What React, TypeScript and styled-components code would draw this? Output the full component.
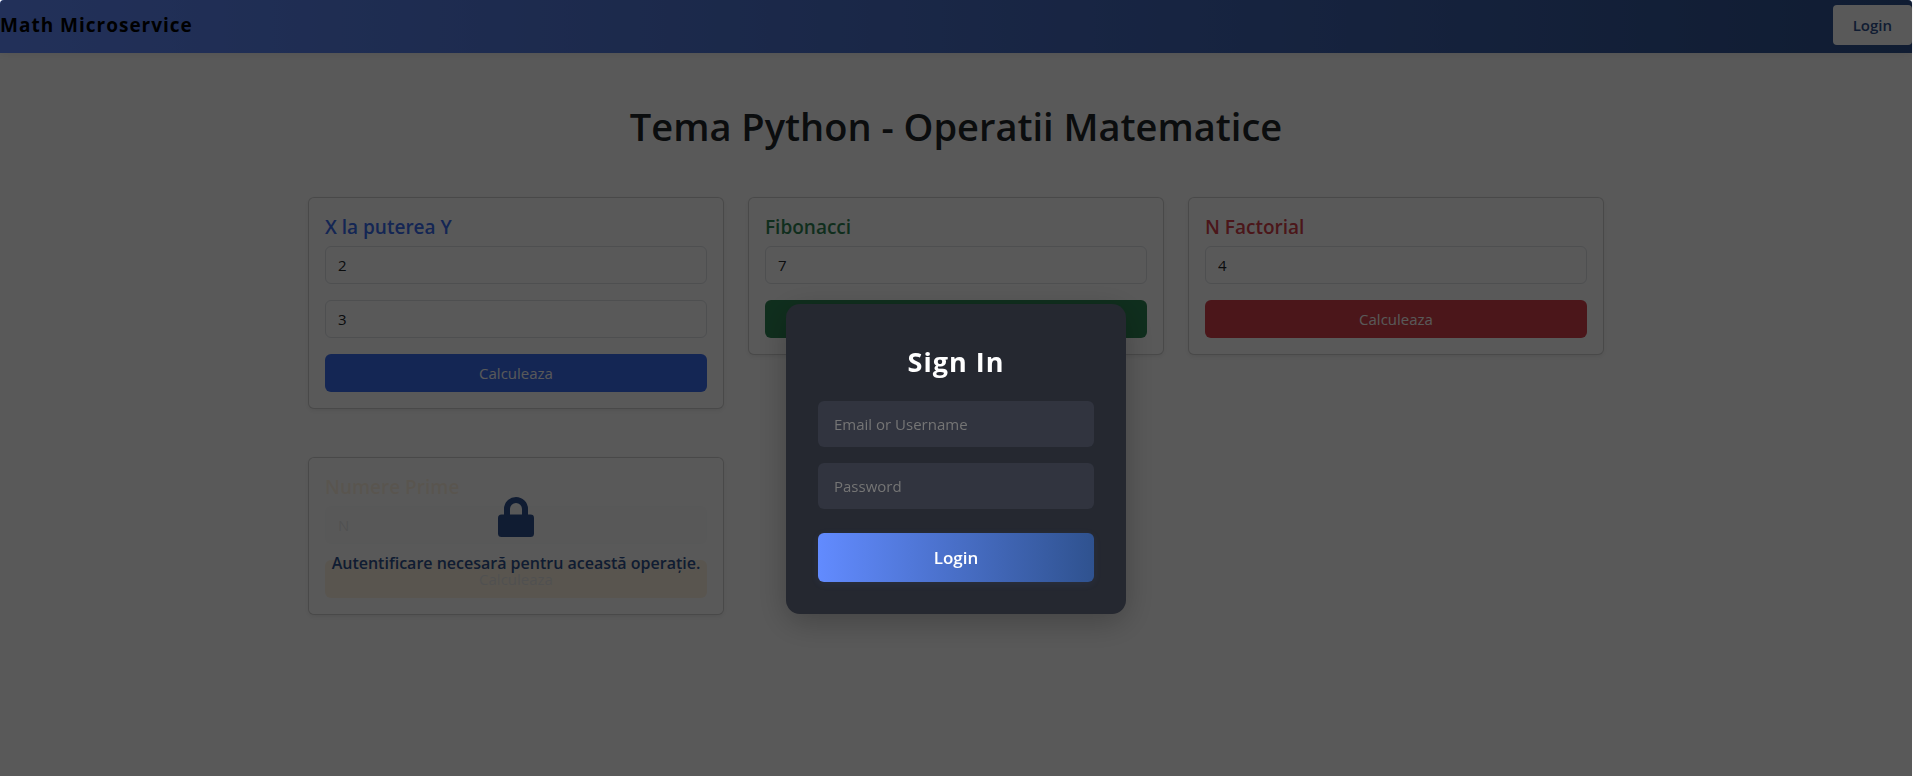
import React from "react";
import styled, { createGlobalStyle } from "styled-components";

const GlobalStyle = createGlobalStyle`
  *, *::before, *::after { box-sizing: border-box; }
  body {
    margin: 0;
    background: #fff;
    color: #212529;
    font: 400 15px/24px "Open Sans", "Noto Sans", sans-serif;
  }
  h1, h2, p { margin: 0; }
  button, input { font: inherit; }
`;

const Page = styled.div`
  min-height: 100vh;
  padding-right: 1px;
`;

const NavBar = styled.header`
  display: flex;
  align-items: center;
  justify-content: space-between;
  padding: 5px 0 8px;
  border-radius: 4px 4px 0 0;
  background: linear-gradient(90deg, #628bff 0%, #2f528f 100%);
  box-shadow: 0 2px 8px rgba(0, 0, 0, 0.07);
`;

const Brand = styled.a`
  color: #000;
  font-size: 19px;
  font-weight: 700;
  letter-spacing: 1px;
  text-decoration: none;
`;

const NavButton = styled.button`
  height: 40px;
  padding: 0 20px;
  border: 0;
  border-radius: 4px;
  background: #fff;
  color: #2f528f;
  font-weight: 600;
`;

const Container = styled.main`
  max-width: 1320px;
  margin: 0 auto;
  padding: 48px 12px;
`;

const PageTitle = styled.h1`
  margin-bottom: 46px;
  font-size: 38px;
  font-weight: 600;
  line-height: 50px;
  text-align: center;
`;

const CardGrid = styled.div`
  display: grid;
  grid-template-columns: repeat(3, 1fr);
  align-items: start;
  gap: 48px 24px;
`;

const Card = styled.form`
  position: relative;
  display: flex;
  flex-direction: column;
  gap: 16px;
  padding: 16px;
  border: 1px solid rgba(0, 0, 0, 0.175);
  border-radius: 6px;
  background: #fff;
  box-shadow: 0 2px 4px rgba(0, 0, 0, 0.075);
`;

const CardTitle = styled.h2<{ $color: string }>`
  margin-bottom: -10px;
  color: ${(p) => p.$color};
  font-size: 19px;
  font-weight: 600;
  line-height: 26px;
`;

const NumberField = styled.input`
  width: 100%;
  height: 38px;
  padding: 6px 12px;
  border: 1px solid #dee2e6;
  border-radius: 6px;
  background: #fff;
  color: #212529;
  &:disabled { background: #e9ecef; }
  &::placeholder { color: #595c5f; opacity: 1; }
`;

const CalcButton = styled.button<{ $color: string; $text?: string }>`
  height: 38px;
  border: 0;
  border-radius: 6px;
  background: ${(p) => p.$color};
  color: ${(p) => p.$text ?? "#fff"};
`;

const LockCover = styled.div`
  position: absolute;
  inset: 0;
  display: flex;
  flex-direction: column;
  align-items: center;
  justify-content: center;
  gap: 14px;
  border-radius: 6px;
  background: rgba(255, 255, 255, 0.85);
  color: #2f528f;
  font-size: 16px;
  font-weight: 600;
  white-space: nowrap;
`;

const LockIcon = styled.svg`
  display: block;
  width: 36px;
  height: 40px;
`;

const Backdrop = styled.div`
  position: fixed;
  inset: 0 1px 0 0;
  display: flex;
  align-items: flex-start;
  justify-content: center;
  padding-top: 304px;
  border-radius: 4px 4px 0 0;
  background: rgba(0, 0, 0, 0.65);
`;

const Dialog = styled.form`
  display: flex;
  flex-direction: column;
  gap: 16px;
  width: 340px;
  padding: 40px 32px 32px;
  border-radius: 14px;
  background: #252830;
  box-shadow: 0 8px 32px rgba(0, 0, 0, 0.25);
`;

const DialogTitle = styled.h2`
  margin-bottom: 6px;
  color: #fff;
  font-size: 27px;
  font-weight: 700;
  letter-spacing: 1px;
  line-height: 35px;
  text-align: center;
`;

const DialogField = styled.input`
  width: 100%;
  height: 46px;
  padding: 0 16px;
  border: 0;
  border-radius: 6px;
  background: #31343f;
  color: #fff;
  &::placeholder { color: #757575; opacity: 1; }
`;

const DialogButton = styled.button`
  height: 49px;
  margin-top: 8px;
  border: 0;
  border-radius: 6px;
  background: linear-gradient(90deg, #628bff 0%, #2f528f 100%);
  box-shadow: 0 2px 8px rgba(98, 139, 255, 0.08);
  color: #fff;
  font-size: 17px;
  font-weight: 600;
`;

type Operation = {
  title: string;
  color: string;
  values: { label: string; value?: string }[];
  buttonText?: string;
  locked?: boolean;
};

const operations: Operation[] = [
  {
    title: "X la puterea Y",
    color: "#3a6df0",
    values: [{ label: "X", value: "2" }, { label: "Y", value: "3" }],
  },
  { title: "Fibonacci", color: "#2e8555", values: [{ label: "N", value: "7" }] },
  { title: "N Factorial", color: "#d63f4a", values: [{ label: "N", value: "4" }] },
  { title: "Numere Prime", color: "#f5b041", values: [{ label: "N" }], buttonText: "#555", locked: true },
];

function OperationCard({ title, color, values, buttonText, locked }: Operation) {
  return (
    <Card onSubmit={(e) => e.preventDefault()}>
      <CardTitle $color={color}>{title}</CardTitle>
      {values.map(({ label, value }) => (
        <NumberField
          key={label}
          aria-label={`${title}: ${label}`}
          placeholder={label}
          defaultValue={value}
          disabled={locked}
        />
      ))}
      <CalcButton $color={color} $text={buttonText} disabled={locked}>Calculeaza</CalcButton>
      {locked && (
        <LockCover>
          <LockIcon viewBox="0 0 36 40" aria-hidden="true">
            <path
              fill="currentColor"
              fillRule="evenodd"
              d="M6 17.500V12a12 12 0 0 1 24 0v5.500h2.500a3.500 3.500 0 0 1 3.500 3.500v15.500a3.500 3.500 0 0 1-3.500 3.500h-29A3.500 3.500 0 0 1 0 36.500V21a3.500 3.500 0 0 1 3.500-3.500zM12 17.500h12V12a6 6 0 0 0-12 0z"
            />
          </LockIcon>
          <p>Autentificare necesară pentru această operație.</p>
        </LockCover>
      )}
    </Card>
  );
}

export default function App() {
  return (
    <Page>
      <GlobalStyle />
      <NavBar>
        <Brand href="#">Math Microservice</Brand>
        <NavButton type="button">Login</NavButton>
      </NavBar>
      <Container>
        <PageTitle>Tema Python - Operatii Matematice</PageTitle>
        <CardGrid>
          {operations.map((op) => <OperationCard key={op.title} {...op} />)}
        </CardGrid>
      </Container>
      <Backdrop>
        <Dialog role="dialog" aria-modal="true" aria-labelledby="sign-in" onSubmit={(e) => e.preventDefault()}>
          <DialogTitle id="sign-in">Sign In</DialogTitle>
          <DialogField aria-label="Email or Username" placeholder="Email or Username" />
          <DialogField aria-label="Password" type="password" placeholder="Password" />
          <DialogButton>Login</DialogButton>
        </Dialog>
      </Backdrop>
    </Page>
  );
}
